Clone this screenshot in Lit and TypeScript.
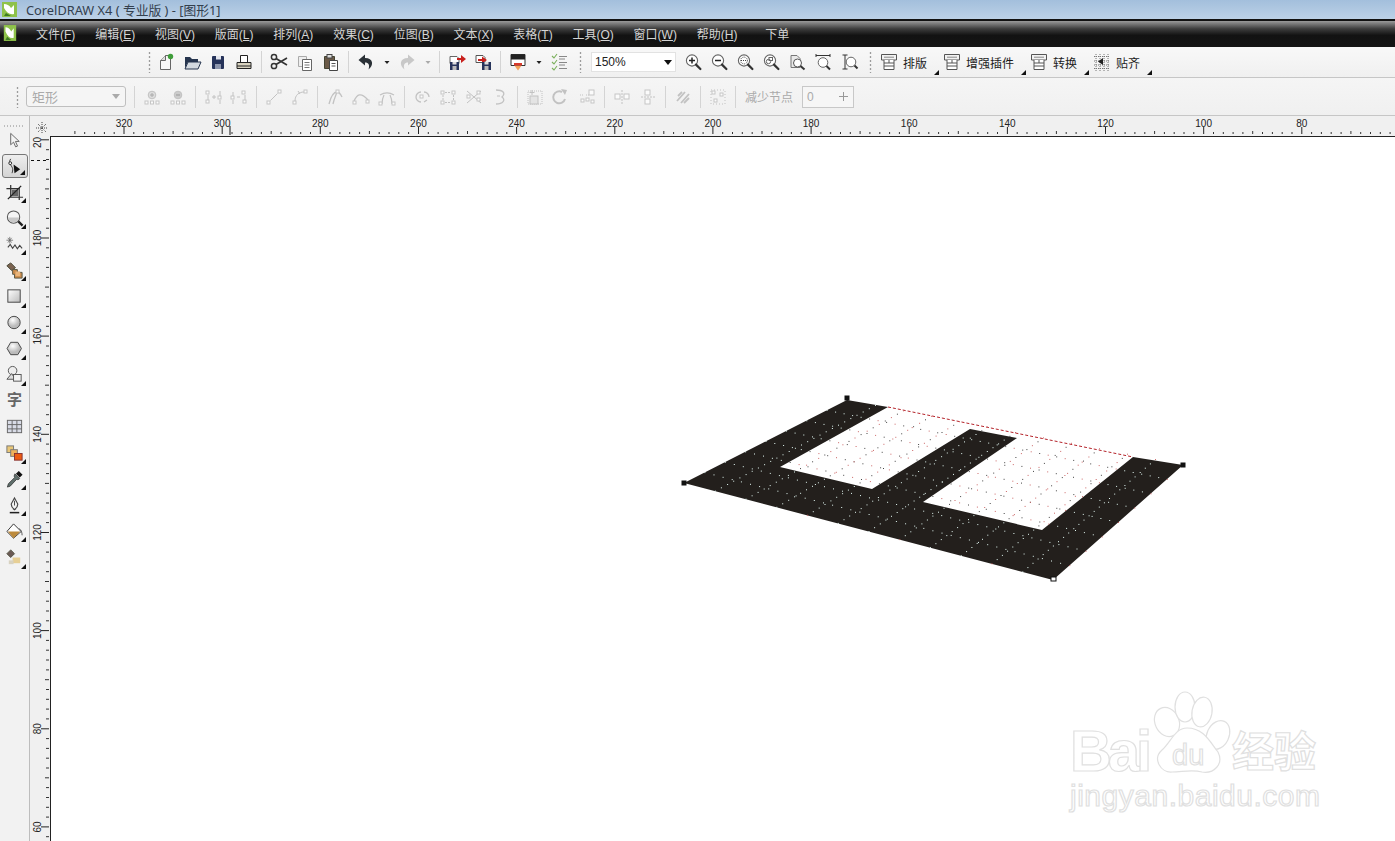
import { LitElement, html, css, svg } from "lit";
import { customElement } from "lit/decorators.js";

const mag = (inner: unknown) => svg`<circle cx="9" cy="8.5" r="5.6" fill="#fff" stroke="#666" stroke-width="1.1"/><path d="M13 12.6l4.4 4.4" stroke="#333" stroke-width="2.2" stroke-linecap="round"/>${inner}`;
const sq = (x: number, y: number, s = 3, c = "#c6c6c6") => svg`<rect x=${x} y=${y} width=${s} height=${s} fill="#fbfbfb" stroke=${c}/>`;
const G = "#c2c2c2";
const tool = svg`<path d="M2.500 2.500h15v5.500h-15z" fill="#f2f2f2" stroke="#555"/><path d="M5 5.200h10" stroke="#888"/><path d="M5 8v9.500h10V8" fill="#fff" stroke="#555"/><path d="M5 11h10M5 14h10M10 8v3" stroke="#555"/>`;

const ICONS: Record<string, unknown> = {
  new: svg`<path d="M4.500 17.500V8.500l5-5h5v14z" fill="#f7f7f7" stroke="#666"/><path d="M4.500 8.500h5v-5" fill="#ddd" stroke="#666"/><circle cx="14.500" cy="4.500" r="2.700" fill="#3f9d3a"/>`,
  open: svg`<path d="M3 5h5l2 2h6v3H6l-3 6z" fill="#26354f"/><path d="M3 17l3-7h13l-3 7z" fill="#d3d9e0" stroke="#26354f"/>`,
  save: svg`<rect x="4" y="4" width="12" height="13" rx="1" fill="#26335a"/><rect x="8" y="4" width="5" height="3.500" fill="#e4e7ef"/><rect x="7" y="12" width="6" height="5" fill="#8d96ad"/>`,
  print: svg`<path d="M6.500 3.500h7v7h-7z" fill="#fff" stroke="#222"/><path d="M3 10.500h14v6H3z" fill="#d8d2bf" stroke="#222"/><path d="M3 14h14" stroke="#222"/>`,
  cut: svg`<circle cx="5" cy="5" r="2.600" fill="none" stroke="#333" stroke-width="1.500"/><circle cx="5" cy="14" r="2.600" fill="none" stroke="#333" stroke-width="1.500"/><path d="M7 6.500L18 13M7 12.500L18 6" stroke="#333" stroke-width="1.600"/>`,
  copy: svg`<path d="M3.500 4.500h8v10h-8z" fill="#eee" stroke="#aaa"/><path d="M7.500 7.500h9v11h-9z" fill="#fff" stroke="#666"/><path d="M9.500 10.500h5M9.500 13h5M9.500 15.500h5" stroke="#777"/>`,
  paste: svg`<path d="M3.500 4.500h10v12h-10z" fill="#6b5a48" stroke="#443"/><rect x="6" y="2.500" width="5" height="3.500" fill="#ddd" stroke="#444"/><path d="M8.500 8.500h8v10h-8z" fill="#fff" stroke="#444"/><path d="M10.500 11.500h4M10.500 14h4" stroke="#555"/>`,
  undo: svg`<path d="M9 2.500L2.500 8 9 13.500V10.500c3.500 0 5 2.500 3.500 7 5.500-4 5-11.500-3.500-11.500z" fill="#2a3036"/>`,
  redo: svg`<path d="M11 2.500L17.500 8 11 13.500V10.500c-3.500 0-5 2.500-3.500 7-5.500-4-5-11.500 3.500-11.500z" fill="#c8c8c8"/>`,
  drop: svg`<path d="M7.500 9h5L10 12z" fill="#222"/>`,
  dropg: svg`<path d="M7.500 9h5L10 12z" fill="#aaa"/>`,
  imp: svg`<path d="M3 4.500h7l2 2v5H3z" fill="#fff" stroke="#666"/><rect x="3" y="10" width="9" height="8" fill="#26335a"/><rect x="5.500" y="10" width="4" height="2.500" fill="#ddd"/><rect x="5.500" y="14" width="4" height="4" fill="#bbb"/><path d="M10 6h4V3l5 4-5 4V8h-4z" fill="#c8201c"/>`,
  exp: svg`<path d="M3 3.500h7l2 2v5H3z" fill="#fff" stroke="#555"/><path d="M5 7h4V4.500l5 3.500-5 3.500V9H5z" fill="#c8201c"/><rect x="9" y="10" width="9" height="8" fill="#26335a"/><rect x="11.500" y="10" width="4" height="2.500" fill="#ddd"/><rect x="11.500" y="14" width="4" height="4" fill="#bbb"/>`,
  launch: svg`<path d="M3 2.500h14v11H3z" fill="#fff" stroke="#333"/><path d="M3 2.500h14v5H3z" fill="#222"/><path d="M6.500 13.500h7l-2 3-1.500 2-1.500-2z" fill="#f4a35c"/><path d="M6 11h8v2.500H6z" fill="#d8392c"/>`,
  opts: svg`<path d="M3 4l2 2 3-4M3 10l2 2 3-4M3 16l2 2 3-4" fill="none" stroke="#7bb05c" stroke-width="1.100"/><path d="M10 4.500h8M10 7h6M10 10.500h8M10 13h6M10 16.500h8" stroke="#888"/>`,
  zin: mag(svg`<path d="M6 8.500h6M9 5.500v6" stroke="#222" stroke-width="1.500"/>`),
  zout: mag(svg`<path d="M6 8.500h6" stroke="#222" stroke-width="1.500"/>`),
  zsel: mag(svg`<circle cx="9" cy="8.500" r="3.400" fill="none" stroke="#444" stroke-dasharray="1 1"/><path d="M6 8.500h6" stroke="#444" stroke-dasharray="1 1"/>`),
  zall: mag(svg`<circle cx="7.500" cy="9.500" r="2.200" fill="none" stroke="#666"/><rect x="8" y="5.500" width="3.500" height="3" fill="none" stroke="#666"/>`),
  zpage: svg`<path d="M4 3.500h6l3 3v9H4z" fill="#e9e9e9" stroke="#777"/><circle cx="10.500" cy="11" r="4" fill="#fff" stroke="#555"/><path d="M13.500 14l4 3.500" stroke="#333" stroke-width="2"/>`,
  zw: svg`<path d="M3 3.500h14M3 2v3M17 2v3" stroke="#333"/><circle cx="10" cy="10.500" r="4.800" fill="#fff" stroke="#666"/><path d="M13.500 14l3.500 3.500" stroke="#333" stroke-width="2"/>`,
  zh: svg`<path d="M3.500 3h5M3.500 17h5M6 3v14" stroke="#333"/><circle cx="12" cy="10" r="4.800" fill="#fff" stroke="#666"/><path d="M15.500 13.500l3 3" stroke="#333" stroke-width="2"/>`,
  tool,
  snap: svg`<path d="M2 4.500h16M2 9h16M2 13h16M2 16.500h16M4 2v17M8 2v17M12 2v17M16 2v17" stroke="#777" stroke-dasharray="1 1"/><path d="M6 9.500l5-3.500v7z" fill="#222"/>`,
  p1: svg`${sq(3, 14)}${sq(8.500, 14)}${sq(14, 14)}<circle cx="10" cy="8" r="3.800" fill="#ddd" stroke=${G}/><path d="M8 8h4M10 6v4" stroke="#aaa"/>`,
  p2: svg`${sq(3, 14)}${sq(8.500, 14)}${sq(14, 14)}<circle cx="10" cy="8" r="3.800" fill="#ccc" stroke=${G}/><path d="M8 8h4" stroke="#999"/>`,
  p3: svg`${sq(3, 4)}${sq(3, 13)}${sq(15, 9)}<path d="M5 8v5M17 4v5M17 13v4M9 10h4M11 8v4" stroke=${G}/>`,
  p4: svg`${sq(2, 9)}${sq(13, 4)}${sq(14, 13)}<path d="M4 5v4M4 13v4M8 10h3M16 8v5" stroke=${G}/>`,
  p5: svg`${sq(3, 14)}${sq(14, 3)}<path d="M6.500 13.500l7-7" stroke=${G}/>`,
  p6: svg`${sq(3, 14)}${sq(14, 3)}<path d="M5 14C5 8 9 5 14 5" fill="none" stroke=${G}/><path d="M8 4l2 3" stroke=${G}/>`,
  p7: svg`<path d="M4 17C6 9 9 5 12 5c2 0 4 3 5 5M8 17c1-5 3-9 4-12" fill="none" stroke=${G} stroke-width="1.300"/>${sq(11, 3)}`,
  p8: svg`<path d="M3 14C6 7 10 5 17 13" fill="none" stroke=${G} stroke-width="1.300"/>${sq(2, 14)}${sq(15, 13)}`,
  p9: svg`<path d="M3 8c5-3 9-3 14 0M5 17c0-4 1-7 2-9M15 17c0-4-1-7-2-9" fill="none" stroke=${G} stroke-width="1.200"/>${sq(2, 15)}${sq(15, 15)}`,
  p10: svg`<path d="M9 5a5 5 0 1 0 0 10M12 5a5 5 0 0 1 5 5M12 15l3-2" fill="none" stroke=${G} stroke-width="1.300"/>${sq(8, 8)}`,
  p11: svg`${sq(3, 4)}${sq(14, 4)}${sq(3, 14)}${sq(14, 14)}<path d="M7 5.500h6M5 8v5M7 15.500h6M15.500 8v5" stroke=${G} stroke-dasharray="2 1"/>`,
  p12: svg`<path d="M3 4l14 12M3 16L17 4" stroke=${G}/>${sq(3, 8)}${sq(13, 4)}${sq(13, 11)}`,
  p13: svg`<path d="M6 3c7 0 10 3 6 7 4 3 1 7-6 7" fill="none" stroke=${G} stroke-width="1.300"/><path d="M7 9h3" stroke=${G}/>`,
  p14: svg`<rect x="3" y="4" width="14" height="13" fill="none" stroke=${G} stroke-dasharray="1 1"/><rect x="5" y="9" width="8" height="8" fill="#e4e4e4" stroke=${G}/><path d="M7 3v5M4.500 5.500h5" stroke=${G}/>`,
  p15: svg`<path d="M14 12a6 6 0 1 1-3-7" fill="none" stroke=${G} stroke-width="2"/><path d="M10 2l6 1-2 5z" fill=${G}/>`,
  p16: svg`${sq(12, 3, 5)}${sq(4, 12)}${sq(9, 11)}${sq(14, 13)}<path d="M3 8h4M9 8h3" stroke=${G} stroke-dasharray="1 1"/>`,
  p17: svg`<path d="M10 3v14" stroke=${G} stroke-dasharray="2 1"/>${sq(3, 7, 5)}${sq(12, 7, 5)}`,
  p18: svg`<path d="M3 10h14" stroke=${G} stroke-dasharray="2 1"/>${sq(7, 3, 5)}${sq(7, 12, 5)}`,
  p19: svg`<path d="M4 14l8-9M8 16l8-9M5 9l4-4M11 16l5-5" stroke=${G} stroke-width="1.800" fill="none"/>`,
  p20: svg`<rect x="3" y="3" width="14" height="14" fill="none" stroke=${G} stroke-dasharray="1 2"/>${sq(4, 4)}${sq(12, 6)}${sq(6, 12)}`,
  t1: svg`<path d="M6 2.500v12l3-2.800 2.200 5 2-.8-2.200-4.900h4z" fill="#f4f4f4" stroke="#666" stroke-linejoin="round"/>`,
  t2: svg`<path d="M6 2c-3 4 1 7 2 10 .6 2-.5 4-.5 5" fill="none" stroke="#333"/><circle cx="5.500" cy="6.500" r="1.500" fill="#fff" stroke="#222"/><path d="M9 8l7 5-6 4z" fill="#111"/>`,
  t3: svg`<path d="M6 2v13h13" fill="none" stroke="#333" stroke-width="1.300"/><path d="M1.500 6H15v12" fill="none" stroke="#333" stroke-width="1.300"/><path d="M7 7h7v7H7z" fill="#666"/><path d="M3 17L17 3" stroke="#222" stroke-width="1.400"/>`,
  t4: svg`<circle cx="9" cy="8.500" r="6.500" fill="#f5f5f5" stroke="#555" stroke-width="1.100"/><path d="M3 9h12c-1 4-3 5-6 5s-5-1-6-5z" fill="#c8c8c8"/><path d="M14 13l4.500 4.500" stroke="#222" stroke-width="2.400"/>`,
  t5: svg`<path d="M5 2v7M1.500 5.500h7M3 3l4 5M7 3L3 8" stroke="#666" stroke-width=".8"/><path d="M3 13l2.500-3 2.500 4 2.500-3.500 2.500 4 2.500-3.500 2.500 3" fill="none" stroke="#444" stroke-width="1.200"/>`,
  t6: svg`<path d="M2 5l4-3 5 5-4 3z" fill="#7b6350" stroke="#443"/><path d="M8 9h5v3h5v6H10v-4H8z" fill="#c98a4a" stroke="#554"/><path d="M11 11h5v5h-5z" fill="#e9b47a"/>`,
  t7: svg`<defs><linearGradient id="rg" x2="1" y2="1"><stop offset="0" stop-color="#fff"/><stop offset="1" stop-color="#bbb"/></linearGradient></defs><rect x="3" y="3" width="13" height="13" fill="url(#rg)" stroke="#444"/>`,
  t8: svg`<defs><radialGradient id="eg" cx=".4" cy=".3"><stop offset="0" stop-color="#fff"/><stop offset="1" stop-color="#bbb"/></radialGradient></defs><circle cx="9.500" cy="10" r="6.500" fill="url(#eg)" stroke="#444"/>`,
  t9: svg`<path d="M6 3.500h7.500l3.800 6.500-3.800 6.500H6L2.200 10z" fill="url(#eg)" stroke="#444"/>`,
  t10: svg`<circle cx="8" cy="6" r="4.500" fill="#eee" stroke="#555"/><path d="M2 15l5-6 4 6z" fill="#ddd" stroke="#555"/><rect x="9" y="10" width="8" height="7" fill="#f4f4f4" stroke="#555"/>`,
  t12: svg`<rect x="2.500" y="3.500" width="15" height="13" fill="#d8dbe6" stroke="#666"/><path d="M2.500 8h15M2.500 12.500h15M7.500 3.500v13M12.500 3.500v13" stroke="#666"/>`,
  t13: svg`<rect x="2" y="2" width="7" height="7" fill="#e9c777" stroke="#777"/><rect x="6" y="6" width="7" height="7" fill="#efb25c" stroke="#777"/><rect x="10" y="10" width="8" height="7" fill="#ec5b12" stroke="#833"/>`,
  t14: svg`<path d="M14.500 1l4 4-3 3-4-4z" fill="#111"/><path d="M10.500 4l5 5-2 1.500-1-1-7 7.500-3 1 1-3.500 7-7-1-1z" fill="#5f6f6c" stroke="#222" stroke-width=".7"/>`,
  t15: svg`<path d="M10 2l3.500 6.500c0 3-1.500 4.500-3.500 6-2-1.500-3.500-3-3.500-6z" fill="#f4f4f4" stroke="#444" stroke-width="1.200"/><path d="M10 5v5" stroke="#444"/><path d="M5 17.500h10" stroke="#222" stroke-width="1.600"/>`,
  t16: svg`<path d="M9 2L2 10l7 7 8-7z" fill="#fff" stroke="#333"/><path d="M3 10h13l-7 7z" fill="#bc8a3c"/><path d="M15 7c2 1 3 4 3 7" stroke="#555" fill="none"/>`,
  t17: svg`<path d="M6 2L2 6l4 4 4-4z" fill="#6b5a55" stroke="#554"/><rect x="8" y="10" width="8" height="6" fill="#e7cf95"/><rect x="4" y="13" width="5" height="4" fill="#d8d2c0"/>`,
};

const TOP: Array<[string, string?]> = [
  ["grip"], ["new"], ["open"], ["save"], ["print"], ["sep"], ["cut"], ["copy"], ["paste"], ["sep"],
  ["undo"], ["drop", "a"], ["redo"], ["dropg", "a"], ["sep"], ["imp"], ["exp"], ["sep"],
  ["launch"], ["drop", "a"], ["opts"],
];
const ZOOMS = ["zin", "zout", "zsel", "zall", "zpage", "zw", "zh"];
const TEXTBTNS: Array<[string, string]> = [["tool", "排版"], ["tool", "增强插件"], ["tool", "转换"], ["snap", "贴齐"]];
const PROP = [
  ["p1", "p2"], ["p3", "p4"], ["p5", "p6"], ["p7", "p8", "p9"], ["p10", "p11", "p12", "p13"],
  ["p14", "p15", "p16"], ["p17", "p18"], ["p19"], ["p20"],
];
const MENU: Array<[string, string]> = [["文件", "F"], ["编辑", "E"], ["视图", "V"], ["版面", "L"], ["排列", "A"], ["效果", "C"], ["位图", "B"], ["文本", "X"], ["表格", "T"], ["工具", "O"], ["窗口", "W"], ["帮助", "H"]];
const BOX: Array<[string, boolean]> = [["t1", false], ["t2", true], ["t3", true], ["t4", true], ["t5", true], ["t6", true], ["t7", true], ["t8", true], ["t9", true], ["t10", true], ["text", false], ["t12", false], ["t13", true], ["t14", true], ["t15", true], ["t16", true], ["t17", true]];

const ic = (n: string) => html`<svg class="ic" viewBox="0 0 20 20">${ICONS[n]}</svg>`;
const logo = svg`<path d="M1 1h15v15H1z" fill="#8ec24a"/><path d="M3 3c3 0 5 1 7 4l3-3v9c-4 1-7-1-10-6z" fill="#fff"/><path d="M5 12l5 3H3z" fill="#3e7d22"/>`;

const PXH = 98.15 / 20;
function hRuler() {
  const W = 1345;
  let minor = "";
  let major = "";
  const labels: unknown[] = [];
  for (let v = 330; v >= 60; v -= 2) {
    const x = 124 + (320 - v) * PXH - 50;
    if (x < 0 || x > W) continue;
    if (v % 20 === 0) {
      major += `M${x.toFixed(1)} 11v7`;
      labels.push(svg`<text x=${x} y="11" text-anchor="middle">${v}</text>`);
    } else minor += `M${x.toFixed(1)} ${v % 10 === 0 ? 15 : 16}V18`;
  }
  return html`<svg class="rul" width=${W} height="20" viewBox="0 0 ${W} 20"><path d=${minor} stroke="#333"/><path d=${major} stroke="#222"/><path d="M180 10v9" stroke="#111"/>${labels}</svg>`;
}
function vRuler() {
  const H = 705;
  let minor = "";
  let major = "";
  const labels: unknown[] = [];
  for (let v = 202; v >= 56; v -= 2) {
    const y = 238 + (180 - v) * PXH - 136;
    if (y < 0 || y > H) continue;
    if (v % 20 === 0) {
      major += `M11 ${y.toFixed(1)}h8`;
      labels.push(v === 200
        ? svg`<text transform="translate(11 12) rotate(-90)">20</text>`
        : svg`<text transform="translate(11 ${y}) rotate(-90)" text-anchor="middle">${v}</text>`);
    } else minor += `M${v % 10 === 0 ? 15 : 16} ${y.toFixed(1)}H19`;
  }
  return html`<svg class="rul" width="20" height=${H} viewBox="0 0 20 ${H}"><path d=${minor} stroke="#333"/><path d=${major} stroke="#222"/><path d="M1 24.500h18" stroke="#111" stroke-dasharray="3 3"/>${labels}</svg>`;
}

const OUT: number[][] = [[684, 483], [847, 400], [888, 407], [780, 467], [872, 489], [970, 429], [1017, 438], [923, 502], [1042, 530], [1133, 457], [1183, 465], [1053, 580]];
const SHAPE = "M" + OUT.map((p) => p.join(" ")).join("L") + "Z";
function inside(x: number, y: number) {
  let c = false;
  for (let i = 0, j = OUT.length - 1; i < OUT.length; j = i++) {
    const [xi, yi] = OUT[i], [xj, yj] = OUT[j];
    if (yi > y !== yj > y && x < ((xj - xi) * (y - yi)) / (yj - yi) + xi) c = !c;
  }
  return c;
}
function dots() {
  const TL = [847, 400], TR = [1183, 465], BR = [1053, 580], BL = [684, 483];
  const pt = (u: number, v: number) => [
    TL[0] * (1 - u) * (1 - v) + TR[0] * u * (1 - v) + BR[0] * u * v + BL[0] * (1 - u) * v,
    TL[1] * (1 - u) * (1 - v) + TR[1] * u * (1 - v) + BR[1] * u * v + BL[1] * (1 - u) * v,
  ];
  let w = "", k = "", r = "";
  const add = (p: number[], n: number) => {
    const s = `M${p[0].toFixed(1)} ${p[1].toFixed(1)}h1`;
    if (inside(p[0], p[1])) w += s;
    else if (n % 2) k += s;
    else r += s;
  };
  for (let i = 1; i < 12; i++) for (let n = 0; n <= 26; n++) add(pt(i / 12, n / 26), n);
  for (let i = 1; i < 8; i++) for (let n = 0; n <= 40; n++) add(pt(n / 40, i / 8), n);
  return svg`<path d=${w} stroke="#e6fbf6" stroke-width="1"/><path d=${k} stroke="#444" stroke-width="1"/><path d=${r} stroke="#c66" stroke-width="1"/>`;
}

@customElement("app-root")
export class AppRoot extends LitElement {
  static styles = css`
    :host { display: block; width: 1395px; height: 841px; overflow: hidden; background: #fff;
      font-family: "Liberation Sans", "Noto Sans CJK SC", sans-serif; font-size: 12px; color: #333; }
    .page { display: flex; flex-direction: column; height: 841px; }
    .title { height: 19px; flex: none; display: flex; align-items: center; gap: 8px; padding-left: 1px;
      background: linear-gradient(#a3bfdc, #bcd1e7); color: #33404e; font-family: "Noto Sans", "Noto Sans CJK SC", sans-serif; font-size: 12.800px; }
    .title svg { width: 17px; height: 17px; }
    .menu { flex: none; display: flex; align-items: center; gap: 19.800px; height: 24px; padding: 0 0 2px 36px; box-sizing: content-box;
      border-top: 2px solid #111; background: linear-gradient(#9a9a9a 0, #3d3d3d 30%, #121212 55%, #141414 100%); color: #d4d4d4; position: relative; }
    .menu u { text-underline-offset: 1px; }
    .menu .mlogo { position: absolute; left: 3px; top: 3px; width: 14px; height: 18px; }
    .menu .last { margin-left: 8px; }
    .bar { flex: none; display: flex; align-items: center; border-bottom: 1px solid #c6c6c6; background: linear-gradient(#f8f8f8, #f0f0f0); }
    .top { height: 30px; padding-left: 147px; }
    .prop { height: 37px; padding-left: 15px; background: linear-gradient(#f5f5f5, #f0f0f0); }
    .b { width: 26px; height: 26px; display: flex; align-items: center; justify-content: center; flex: none; }
    .a { width: 15px; }
    .ic { width: 20px; height: 20px; display: block; flex: none; }
    .b.a .ic { width: 20px; margin: 0 -3px; }
    .sep { width: 1px; height: 22px; margin: 0 4px; background: #d4d4d4; flex: none; }
    .grip { width: 4px; height: 22px; flex: none; margin-right: 2px;
      background-image: radial-gradient(#9c9c9c 0.900px, transparent 1.100px); background-size: 3px 4px; background-repeat: repeat-y; background-position: center top; }
    .combo { width: 85px; height: 20px; flex: none; margin: 0 4px 0 7px; box-sizing: border-box; background: #fff; border: 1px solid #e2e2e2;
      display: flex; align-items: center; justify-content: space-between; padding: 0 3px; font-size: 12px; color: #222; }
    .down { width: 0; height: 0; border: 4px solid transparent; border-top: 5px solid #111; border-bottom: 0; }
    .g2 { margin-left: 6px; }
    .g3 { margin-right: 7px; }
    .tb { position: relative; display: flex; align-items: center; gap: 4px; padding-right: 15px; height: 26px; color: #1c1c1c; font-size: 12px; flex: none; }
    .tb::after { content: ""; position: absolute; right: 3px; bottom: 0; border-left: 5px solid transparent; border-bottom: 5px solid #111; }
    .shapes { width: 100px; height: 21px; flex: none; margin: 0 4px 0 5px; box-sizing: border-box; border: 1px solid #bfbfbf; border-radius: 3px;
      background: #f5f5f5; color: #aaa; display: flex; align-items: center; justify-content: space-between; padding: 0 5px; font-size: 13px; }
    .shapes .down { border-top-color: #aaa; }
    .prop .sep { margin: 0 4px; }
    .pg { display: flex; }
    .reduce { margin: 0 9px 0 5px; color: #aaa; font-size: 12px; white-space: nowrap; flex: none; }
    .num { width: 52px; height: 22px; box-sizing: border-box; border: 1px solid #c8c8c8; background: #f6f6f6; color: #aaa; display: flex; align-items: center; justify-content: space-between; padding: 0 4px; flex: none; }
    .num svg { width: 11px; height: 11px; }
    .work { flex: 1; min-height: 0; display: grid; grid-template-columns: 30px 20px 1fr; grid-template-rows: 20px 1fr; background: #f0f0f0; }
    .box { grid-row: 1 / 3; background: #f2f2f2; border-right: 1px solid #bdbdbd; box-sizing: border-box; padding-top: 9px; display: flex; flex-direction: column; align-items: center; }
    .boxgrip { width: 22px; height: 2px; margin-left: -1px; background-image: radial-gradient(#aaa 0.700px, transparent 0.900px); background-size: 3px 2px; }
    .t { position: relative; width: 26px; height: 26.100px; display: flex; align-items: center; justify-content: center; flex: none; box-sizing: border-box; color: #666; font-size: 15px; font-weight: 600; }
    .t .ic { width: 19px; height: 19px; }
    .t.word { padding-bottom: 5px; }
    .t.sel { height: 24px; margin: 1px 0; border: 1px solid #777; border-radius: 3px; background: linear-gradient(#eee, #d4d4d4); }
    .t.more::after { content: ""; position: absolute; right: 2px; bottom: 2px; border-left: 5px solid transparent; border-bottom: 5px solid #111; }
    .corner { display: flex; align-items: center; justify-content: center; padding: 3px 0 0 3px; box-sizing: border-box; }
    .corner svg { width: 12px; height: 12px; }
    .rul { display: block; }
    .rul text { font: 10px "Liberation Sans", sans-serif; fill: #222; }
    .hr, .vr { overflow: hidden; }
    .canvas { background: #fff; border-left: 1px solid #222; border-top: 1px solid #222; box-sizing: border-box; overflow: hidden; min-height: 0; }
    .art { display: block; margin: -1px 0 0 -1px; }
    .art .wm { fill: #fff; stroke: #e0e0e0; stroke-width: 1.200; font-family: "Liberation Sans", "Noto Sans CJK SC", sans-serif; }
    .art .bold { font-weight: 700; }
    .art .paw { fill: #fff; stroke: #e0e0e0; stroke-width: 1.200; }
  `;

  render() {
    return html`<div class="page">
      <div class="title"><svg viewBox="0 0 17 17">${logo}</svg><span>CorelDRAW X4 ( 专业版 ) - [图形1]</span></div>
      <div class="menu">
        <svg class="mlogo" viewBox="0 0 17 17" preserveAspectRatio="none">${logo}</svg>
        ${MENU.map(([t, k]) => html`<span>${t}(<u>${k}</u>)</span>`)}
        <span class="last">下单</span>
      </div>
      <div class="bar top">
        ${TOP.map(([n, c]) => n === "grip" ? html`<div class="grip"></div>` : n === "sep" ? html`<div class="sep"></div>` : html`<div class="b ${c ?? ""}">${ic(n)}</div>`)}
        <div class="grip g2"></div>
        <div class="combo"><span>150%</span><i class="down"></i></div>
        ${ZOOMS.map((n) => html`<div class="b">${ic(n)}</div>`)}
        <div class="grip g2 g3"></div>
        ${TEXTBTNS.map(([n, t]) => html`<div class="tb">${ic(n)}<span>${t}</span></div>`)}
      </div>
      <div class="bar prop">
        <div class="grip"></div>
        <div class="shapes"><span>矩形</span><i class="down"></i></div>
        ${PROP.map((g) => html`<div class="sep"></div><div class="pg">${g.map((n) => html`<div class="b">${ic(n)}</div>`)}</div>`)}
        <div class="sep"></div>
        <span class="reduce">减少节点</span>
        <div class="num"><span>0</span><svg viewBox="0 0 11 11"><path d="M1 5.500h9M5.500 1v9" stroke="#999"/></svg></div>
      </div>
      <div class="work">
        <div class="box">
          <div class="boxgrip"></div>
          ${BOX.map(([n, more]) => html`<div class="t ${more ? "more" : ""} ${n === "t2" ? "sel" : ""} ${n === "text" ? "word" : ""}">${n === "text" ? "字" : ic(n)}</div>`)}
        </div>
        <div class="corner"><svg viewBox="0 0 12 12"><path d="M6 0v12M0 6h12M2 2l8 8M10 2l-8 8" stroke="#444" stroke-dasharray="1 1"/></svg></div>
        <div class="hr">${hRuler()}</div>
        <div class="vr">${vRuler()}</div>
        <div class="canvas">
          <svg class="art" width="1345" height="705" viewBox="50 136 1345 705">
            <path d=${SHAPE} fill="#231f1c"/>
            <path d="M888 407L1133 457" stroke="#b5232a" stroke-dasharray="3 2" fill="none"/>
            ${dots()}
            ${[[847, 398], [684, 483], [1183, 465]].map(([x, y]) => svg`<rect x=${x - 2.500} y=${y - 2.500} width="5" height="5" fill="#111"/>`)}
            <rect x="1051" y="577" width="5" height="4" fill="#fff" stroke="#111"/>
            <text class="wm bold" x="1070" y="771" font-size="58" textLength="82">Bai</text>
            <g class="paw">
              <ellipse cx="1167" cy="722" rx="12" ry="15" transform="rotate(-25 1167 722)"/>
              <ellipse cx="1185" cy="707" rx="10" ry="15"/>
              <ellipse cx="1202" cy="712" rx="10" ry="15" transform="rotate(10 1202 712)"/>
              <ellipse cx="1218" cy="735" rx="11" ry="15" transform="rotate(25 1218 735)"/>
              <path d="M1187 728c-12 0-16 14-25 22-10 9-1 23 10 22 10 0 20-3 30 0 12 2 22-8 16-20-8-10-14-24-31-24z"/>
            </g>
            <text class="wm" x="1172" y="765" font-size="29">du</text>
            <text class="wm bold" x="1232" y="767" font-size="42">经验</text>
            <text class="wm" x="1070" y="806" font-size="30" textLength="250">jingyan.baidu.com</text>
          </svg>
        </div>
      </div>
    </div>`;
  }
}
